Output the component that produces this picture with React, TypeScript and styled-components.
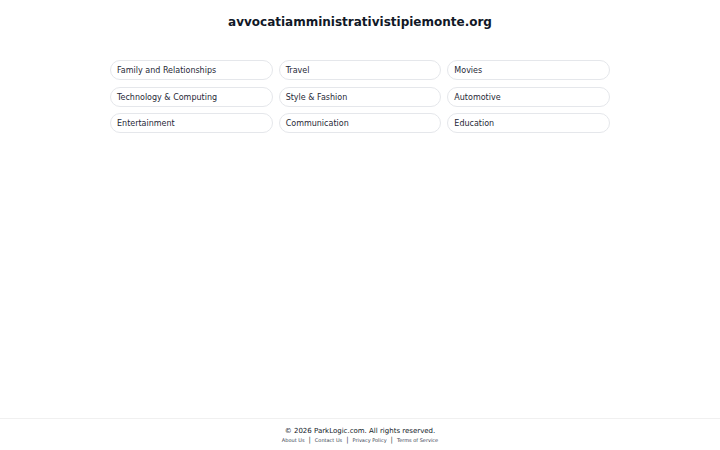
import styled, { createGlobalStyle } from "styled-components";

const GlobalStyle = createGlobalStyle`
  html, body {
    margin: 0;
    padding: 0;
    background: #fff;
    font-family: "DejaVu Sans", sans-serif;
    color: #111827;
  }
`;

const categories = [
  "Family and Relationships",
  "Travel",
  "Movies",
  "Technology & Computing",
  "Style & Fashion",
  "Automotive",
  "Entertainment",
  "Communication",
  "Education",
];

const footerLinks = ["About Us", "Contact Us", "Privacy Policy", "Terms of Service"];

export default function App() {
  return (
    <Page>
      <GlobalStyle />
      <Main>
        <Title>avvocatiamministrativistipiemonte.org</Title>
        <Grid>
          {categories.map((c) => (
            <Pill key={c} href="#">
              {c}
            </Pill>
          ))}
        </Grid>
      </Main>
      <Footer>
        <Copy>© 2026 ParkLogic.com. All rights reserved.</Copy>
        <Links>
          {footerLinks.map((l, i) => (
            <span key={l}>
              {i > 0 && <Sep>|</Sep>}
              <FooterLink href="#">{l}</FooterLink>
            </span>
          ))}
        </Links>
      </Footer>
    </Page>
  );
}

const Page = styled.div`
  min-height: 450px;
  display: flex;
  flex-direction: column;
`;

const Main = styled.main`
  flex: 1;
  display: flex;
  flex-direction: column;
  align-items: center;
  padding-top: 15px;
`;

const Title = styled.h1`
  margin: 0;
  font-size: 12px;
  font-weight: 700;
  color: #111827;
  line-height: 15px;
`;

const Grid = styled.div`
  margin-top: 30px;
  width: 500px;
  display: grid;
  grid-template-columns: repeat(3, 1fr);
  column-gap: 6px;
  row-gap: 6.5px;
`;

const Pill = styled.a`
  display: block;
  height: 20px;
  box-sizing: border-box;
  border: 1px solid #e5e7eb;
  border-radius: 999px;
  padding: 1px 6px 0;
  font-size: 8px;
  line-height: 18px;
  color: #1f2937;
  text-decoration: none;
  white-space: nowrap;
`;

const Footer = styled.footer`
  border-top: 1px solid #f0f0f0;
  padding: 8px 0 6px;
  text-align: center;
`;

const Copy = styled.div`
  font-size: 7px;
  line-height: 9px;
  color: #111827;
`;

const Links = styled.div`
  font-size: 5px;
  line-height: 8px;
  color: #374151;
`;

const Sep = styled.span`
  margin: 0 4px;
  font-size: 7px;
`;

const FooterLink = styled.a`
  color: #374151;
  text-decoration: none;
`;
